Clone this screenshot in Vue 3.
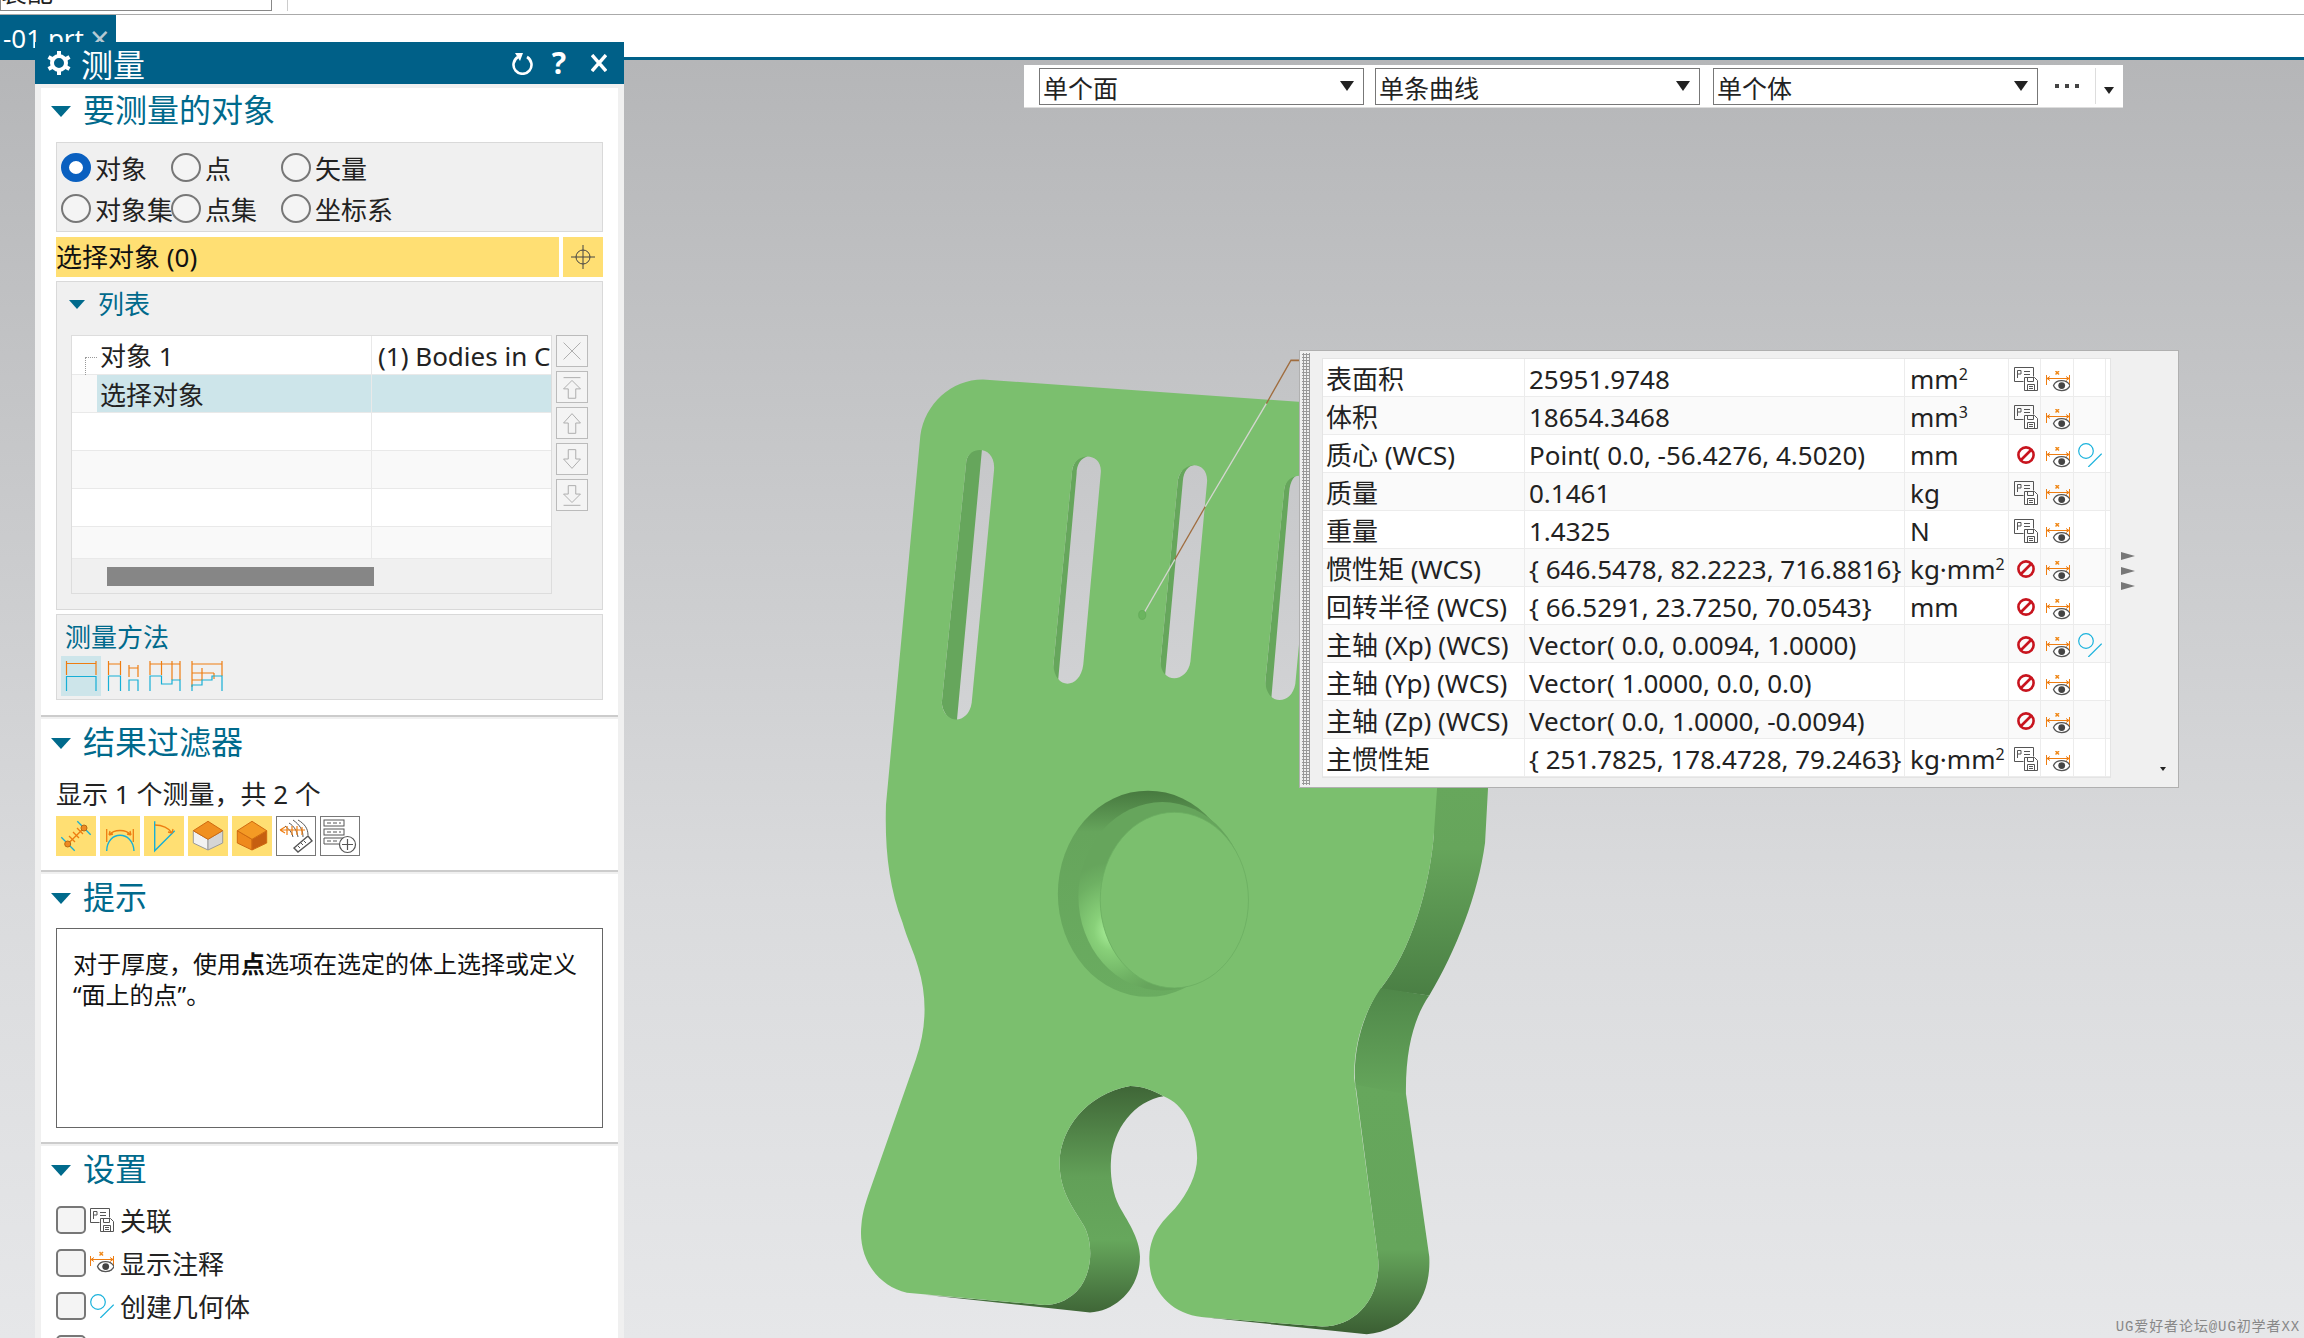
<script setup>
const radios = [
  { label: '对象', on: true },
  { label: '点' },
  { label: '矢量' },
  { label: '对象集' },
  { label: '点集' },
  { label: '坐标系' }
]

const listRows = [
  { name: '对象 1', value: '(1) Bodies in Component', cls: 'first' },
  { name: '选择对象', value: '', cls: 'picked' },
  { name: '', value: '', cls: '' },
  { name: '', value: '', cls: 'alt' },
  { name: '', value: '', cls: '' },
  { name: '', value: '', cls: 'alt short' }
]

const sideButtons = ['ic-del', 'ic-top', 'ic-up', 'ic-down', 'ic-bottom']
const methods = ['ic-m1', 'ic-m2', 'ic-m3', 'ic-m4']
const filters = [
  { icon: 'ic-f1', on: true },
  { icon: 'ic-f2', on: true },
  { icon: 'ic-f3', on: true },
  { icon: 'ic-f4', on: true },
  { icon: 'ic-f5', on: true },
  { icon: 'ic-f6' },
  { icon: 'ic-f7' }
]

const settings = [
  { label: '关联', icon: 'ic-save' },
  { label: '显示注释', icon: 'ic-note' },
  { label: '创建几何体', icon: 'ic-geo' }
]

const results = [
  { name: '表面积', value: '25951.9748', unit: 'mm', sup: '2', save: true },
  { name: '体积', value: '18654.3468', unit: 'mm', sup: '3', save: true },
  { name: '质心 (WCS)', value: 'Point( 0.0, -56.4276, 4.5020)', unit: 'mm', geo: true },
  { name: '质量', value: '0.1461', unit: 'kg', save: true },
  { name: '重量', value: '1.4325', unit: 'N', save: true },
  { name: '惯性矩 (WCS)', value: '{ 646.5478, 82.2223, 716.8816}', unit: 'kg·mm', sup: '2' },
  { name: '回转半径 (WCS)', value: '{ 66.5291, 23.7250, 70.0543}', unit: 'mm' },
  { name: '主轴 (Xp) (WCS)', value: 'Vector( 0.0, 0.0094, 1.0000)', unit: '', geo: true },
  { name: '主轴 (Yp) (WCS)', value: 'Vector( 1.0000, 0.0, 0.0)', unit: '' },
  { name: '主轴 (Zp) (WCS)', value: 'Vector( 0.0, 1.0000, -0.0094)', unit: '' },
  { name: '主惯性矩', value: '{ 251.7825, 178.4728, 79.2463}', unit: 'kg·mm', sup: '2', save: true }
]
</script>

<template>
  <div class="app">
    <!-- icon sprite -->
    <svg class="sprite" width="0" height="0">
      <defs>
        <symbol id="ic-save" viewBox="0 0 24 24">
          <g fill="none" stroke="#555" stroke-width="1">
            <path d="M9.5 14.500H.5V.5h19v9" />
            <path d="M3.500 11V3.500h3.500v3.500H3.500M10 4.500h6M10 7.500h6" />
            <path d="M10.500 10.500h10l3 3v10h-13zM13.500 10.500v4h6v-4M13.500 23.500v-6h7v6M15 19.500h4M15 21.500h4" fill="#fff" />
          </g>
        </symbol>
        <symbol id="ic-note" viewBox="0 0 24 22">
          <path d="M9.500 0l3.500 3.500M13 0L9.500 3.500" stroke="#f08a1c" stroke-width="1.500" fill="none" />
          <path d="M.5 4v10M23.500 4v10M1 7.500h22M1 7.500l3-2M1 7.500l3 2M23 7.500l-3-2M23 7.500l-3 2" stroke="#ee7d11" stroke-width="1" fill="none" />
          <path d="M7.500 14.600C10 7.900 21 7.900 24 14.600C21 21.300 10 21.300 7.500 14.600z" fill="#fff" stroke="#555" stroke-width="1.300" />
          <circle cx="15.700" cy="14.600" r="3.400" fill="#444" />
        </symbol>
        <symbol id="ic-geo" viewBox="0 0 24 24">
          <circle cx="8" cy="8" r="7.300" fill="none" stroke="#1ab2dc" stroke-width="1.200" />
          <path d="M10.300 24L23.700 10.700" stroke="#1ab2dc" stroke-width="1.200" />
        </symbol>
        <symbol id="ic-no" viewBox="0 0 18 18">
          <circle cx="9" cy="9" r="7.600" fill="none" stroke="#c8141e" stroke-width="2.600" />
          <path d="M4 14L14 4" stroke="#c8141e" stroke-width="2.600" />
        </symbol>
        <symbol id="ic-del" viewBox="0 0 32 32">
          <path d="M7 7l18 18M25 7L7 25" stroke="#aaa" fill="none" />
        </symbol>
        <symbol id="ic-top" viewBox="0 0 32 32">
          <path d="M7 6h18M16 9l9 9h-5v10h-8V18H7z" stroke="#aaa" fill="#f4f4f4" />
        </symbol>
        <symbol id="ic-up" viewBox="0 0 32 32">
          <path d="M16 6l9 10h-5v11h-8V16H7z" stroke="#aaa" fill="#f4f4f4" />
        </symbol>
        <symbol id="ic-down" viewBox="0 0 32 32">
          <path d="M16 26l9-10h-5V6h-8v10H7z" stroke="#aaa" fill="#f4f4f4" />
        </symbol>
        <symbol id="ic-bottom" viewBox="0 0 32 32">
          <path d="M7 27h18M16 24l9-9h-5V6h-8v9H7z" stroke="#aaa" fill="#f4f4f4" />
        </symbol>
        <symbol id="ic-m1" viewBox="0 0 40 40">
          <path d="M5.500 5v14M35 5v14M5.500 7.500H35" stroke="#ee7d11" fill="none" stroke-width="1.200" />
          <path d="M5.500 35V20.500H35V35" stroke="#17afd6" fill="none" stroke-width="1.200" />
        </symbol>
        <symbol id="ic-m2" viewBox="0 0 40 40">
          <path d="M5.500 5v14M17.500 5v14M5.500 8H17.500M26 9v12M35 9v12M26 12h9" stroke="#ee7d11" fill="none" stroke-width="1.200" />
          <path d="M5.500 35V20H17.500V35M26 35V24H35V35" stroke="#17afd6" fill="none" stroke-width="1.200" />
        </symbol>
        <symbol id="ic-m3" viewBox="0 0 40 40">
          <path d="M5 5v14M16.500 5v14M27 5v19M35 5v19M5 8H35" stroke="#ee7d11" fill="none" stroke-width="1.200" />
          <path d="M5 35V20H16.500V28H27V24H35V35" stroke="#17afd6" fill="none" stroke-width="1.200" />
        </symbol>
        <symbol id="ic-m4" viewBox="0 0 40 40">
          <path d="M5 5v26M35 5v15M15 12v12M27 17v6M5 8H35M5 17H27M5 24H15" stroke="#ee7d11" fill="none" stroke-width="1.200" />
          <path d="M5 35v-6H15v-5H25v-4h10V35" stroke="#17afd6" fill="none" stroke-width="1.200" />
        </symbol>
        <symbol id="ic-f1" viewBox="0 0 40 40">
          <path d="M5.300 21.300L18.700 34.700M21.300 5.300L34.700 18.700" stroke="#17afd6" stroke-width="1.300" />
          <path d="M11.700 28L28 12M13 20l6 6M17 16l6 6M21 12l6 6" stroke="#ee7d11" stroke-width="1.300" />
          <circle cx="11.700" cy="28" r="3" fill="#ee8a22" stroke="#b96a12" />
          <circle cx="28" cy="12" r="3" fill="#ee8a22" stroke="#b96a12" />
        </symbol>
        <symbol id="ic-f2" viewBox="0 0 40 40">
          <path d="M6.700 13v13M33.300 13v13M9 19C14 13 26 13 31 19M9 19l4-1M9 19l1-4M31 19l-4-1M31 19l-1-4" stroke="#ee7d11" stroke-width="1.300" fill="none" />
          <path d="M6.700 35C7 14 33 14 34 35" stroke="#17afd6" stroke-width="1.400" fill="none" />
        </symbol>
        <symbol id="ic-f3" viewBox="0 0 40 40">
          <path d="M10.700 5.300V34.700L30.700 14.700" stroke="#17afd6" stroke-width="1.400" fill="none" />
          <path d="M11 9C18 9 25 12 28 17M28 17l-4-1M28 17l1-4" stroke="#ee7d11" stroke-width="1.300" fill="none" />
        </symbol>
        <symbol id="ic-f4" viewBox="0 0 40 40">
          <path d="M5.300 14.700V27L20 34V23.300z" fill="#f2f2f2" stroke="#9a9a9a" />
          <path d="M34.700 14.700V27L20 34V23.300z" fill="#d5d5d5" stroke="#9a9a9a" />
          <path d="M20 5.300L34.700 14.700L20 23.300L5.300 14.700z" fill="#f09020" stroke="#cf6a10" />
        </symbol>
        <symbol id="ic-f5" viewBox="0 0 40 40">
          <path d="M5.300 14.700V27L20 34V23.300z" fill="#ef8a1c" stroke="#cf6a10" />
          <path d="M34.700 14.700V27L20 34V23.300z" fill="#c65f10" stroke="#cf6a10" />
          <path d="M20 5.300L34.700 14.700L20 23.300L5.300 14.700z" fill="#f49a24" stroke="#cf6a10" />
        </symbol>
        <symbol id="ic-f6" viewBox="0 0 40 40">
          <path d="M17 4C24 9 27 14 27 21M22 4C29 8 32 13 32 19M13 7C18 10 21 15 22 21M9 10C13 13 16 16 17 21" stroke="#555" fill="none" />
          <path d="M4 14H29M4 14l5-3M4 14l5 3M11 10v9M16 10v9M21 10v9M26 11v8" stroke="#ee7d11" fill="none" stroke-width="1.200" />
          <path d="M18 32L32 20L36 25L22 36z" fill="#fff" stroke="#555" stroke-width="1.400" />
          <path d="M22 30l2 2M25 27l2 2M28 25l2 2" stroke="#555" />
        </symbol>
        <symbol id="ic-f7" viewBox="0 0 40 40">
          <g fill="none" stroke="#555">
            <rect x="4" y="4" width="20" height="6" />
            <rect x="4" y="13" width="20" height="6" />
            <path d="M19 28H4v-6h20" />
            <path d="M7 7h4M13 7h4M19 7h2M7 16h4M13 16h4M19 16h2M7 25h4M13 25h4" />
            <circle cx="27.500" cy="28.500" r="8" fill="#fff" stroke-width="1.200" />
            <path d="M27.500 23v11M22 28.500h11" stroke-width="1.200" />
          </g>
        </symbol>
      </defs>
    </svg>

    <div class="topbar">
      <div class="top-input"><span>装配</span></div>
      <div class="top-sep"></div>
    </div>
    <div class="tabbar">
      <div class="tab"><span>-01 prt</span><span class="tab-close">×</span></div>
    </div>

    <!-- 3d model -->
    <svg class="scene" width="2304" height="1338" viewBox="0 0 2304 1338">
      <defs>
        <linearGradient id="sideA" x1="0" y1="0" x2="0" y2="1">
          <stop offset="0" stop-color="#67a75c" />
          <stop offset=".3" stop-color="#66a55b" />
          <stop offset="1" stop-color="#4a7f44" />
        </linearGradient>
        <linearGradient id="sideB" x1="0" y1="0" x2="0" y2="1">
          <stop offset="0" stop-color="#4f8749" />
          <stop offset="1" stop-color="#66a75c" />
        </linearGradient>
        <linearGradient id="sideC" x1="0" y1="0" x2="0" y2="1">
          <stop offset="0" stop-color="#66a75c" />
          <stop offset=".66" stop-color="#65a55b" />
          <stop offset="1" stop-color="#3b5e33" />
        </linearGradient>
        <linearGradient id="sideD" x1="0" y1="0" x2="0" y2="1">
          <stop offset="0" stop-color="#3f6637" />
          <stop offset=".4" stop-color="#62a058" />
          <stop offset=".68" stop-color="#66a75c" />
          <stop offset="1" stop-color="#3f6637" />
        </linearGradient>
        <linearGradient id="dentOuter" x1="0" y1="0" x2="0" y2="1">
          <stop offset="0" stop-color="#47793f" />
          <stop offset=".2" stop-color="#66a55c" />
          <stop offset="1" stop-color="#6aac60" />
        </linearGradient>
        <radialGradient id="dentFillet" cx=".2" cy=".68" r=".36">
          <stop offset="0" stop-color="#aef39e" />
          <stop offset=".3" stop-color="#88d079" />
          <stop offset=".75" stop-color="#6eb163" />
          <stop offset="1" stop-color="#66a55c" />
        </radialGradient>
      </defs>
      <g transform="translate(840 340) scale(.4464 .6365)">
        <!-- extrusion walls -->
        <path fill="url(#sideA)" d="M1330 700L1452 700L1445 790C1430 870 1380 960 1320 1030L1210 1020C1280 960 1320 860 1330 780z" />
        <path fill="url(#sideB)" d="M1210 1018L1320 1030C1290 1060 1265 1110 1268 1190L1155 1175C1145 1110 1180 1050 1210 1018z" />
        <path fill="url(#sideC)" d="M1155 1170L1268 1185L1320 1440C1325 1500 1280 1555 1180 1562L810 1535L1080 1550C1160 1550 1215 1500 1205 1440z" />
        <path fill="url(#sideD)" d="M650 1172C550 1185 495 1240 492 1290C490 1340 530 1370 545 1390C570 1420 565 1470 530 1495C500 1515 470 1518 440 1515L190 1500L560 1528C620 1525 672 1490 672 1440C672 1410 640 1380 625 1360C610 1340 605 1310 607 1290C610 1240 660 1195 725 1188C700 1178 675 1172 650 1172z" />
        <path fill="#66a65c" d="M283 190C290 170 320 165 318 172L262 597C245 600 230 585 228 570z" />
        <path fill="#66a65c" d="M520 205C525 185 545 180 555 183C540 185 530 195 530 210L488 540C478 530 476 520 478 510z" />
        <path fill="#66a65c" d="M757 220C765 198 785 192 795 196C780 198 770 205 768 222L728 530C718 525 716 515 718 505z" />
        <path fill="#66a65c" d="M995 235C1000 212 1020 205 1035 208C1018 212 1008 220 1006 240L966 565C955 560 951 548 953 535z" />
        <!-- front face, slots and keyhole are open -->
        <path fill="#7bbf6e" fill-rule="evenodd" d="M180 150C190 100 250 62 320 62L1450 118L1338 700L1330 780C1320 860 1280 960 1210 1020C1180 1050 1150 1100 1152 1160L1205 1440C1215 1500 1160 1550 1080 1550L810 1535C740 1530 690 1490 693 1440C695 1400 730 1380 750 1365C780 1340 800 1310 800 1285C800 1240 770 1200 725 1188C700 1178 675 1172 650 1172C550 1185 495 1240 492 1290C490 1340 530 1370 545 1390C570 1420 565 1470 530 1495C500 1515 470 1518 440 1515L150 1497C80 1485 40 1440 48 1390C50 1370 60 1350 70 1330L170 1130C195 1080 195 1030 175 985C165 960 150 940 140 915C110 860 100 800 103 730z
          M283 190C290 165 350 165 345 205L295 570C288 605 232 605 228 570z
          M520 205C525 175 590 175 584 210L545 510C538 550 480 550 478 510z
          M757 220C765 188 828 188 822 225L785 505C778 540 718 540 718 505z
          M995 235C1000 205 1065 205 1060 240L1020 540C1012 575 953 575 953 535z" />
        <!-- boss -->
        <ellipse cx="690" cy="870" rx="202" ry="162" fill="url(#dentOuter)" />
        <ellipse cx="722" cy="874" rx="188" ry="148" fill="url(#dentFillet)" />
        <ellipse cx="749" cy="880" rx="166" ry="138" fill="#7bbf6e" stroke="#6cae62" stroke-width="1.500" />
        <!-- leader line -->
        <g fill="none" stroke-width="2.600">
          <path d="M1032 32H1010L955 100" stroke="#a06d3f" />
          <path d="M955 100L818 262" stroke="#d4d6d0" />
          <path d="M818 262L750 345" stroke="#a06d3f" />
          <path d="M750 345L680 430" stroke="#d4d6d0" />
        </g>
        <ellipse cx="677" cy="432" rx="8" ry="7" fill="#6bb55f" stroke="#5da353" />
      </g>
    </svg>

    <!-- selection toolbar -->
    <div class="toolbar">
      <div class="combo c1"><span>单个面</span><i></i></div>
      <div class="combo c2"><span>单条曲线</span><i></i></div>
      <div class="combo c3"><span>单个体</span><i></i></div>
      <div class="more"><i></i><i></i><i></i></div>
      <div class="tool-sep"></div>
      <i class="tool-arrow"></i>
    </div>

    <!-- measure dialog -->
    <div class="dialog">
      <div class="dlg-head">
        <svg class="gear" width="24" height="26" viewBox="0 0 24 26">
          <circle cx="12" cy="13" r="7" fill="none" stroke="#fff" stroke-width="4" />
          <path d="M12 1v5M12 20v5M1.500 7l4.500 2.500M18 16.500l4.500 2.500M1.500 19L6 16.500M18 9.500L22.500 7" stroke="#fff" stroke-width="4" />
        </svg>
        <span class="dlg-title">测量</span>
        <svg class="head-btn reset" width="22" height="24" viewBox="0 0 22 24">
          <path d="M6 6a9 9 0 1 0 9 0" fill="none" stroke="#fff" stroke-width="2.600" />
          <path d="M11 2L3 2L8 10z" fill="#fff" />
        </svg>
        <span class="head-q">?</span>
        <svg class="head-btn" width="16" height="18" viewBox="0 0 16 18">
          <path d="M1 1L15 17M15 1L1 17" stroke="#fff" stroke-width="3.400" />
        </svg>
      </div>

      <div class="dlg-body">
        <section class="panel p1">
          <h3 class="sec-head"><i class="caret"></i><span>要测量的对象</span></h3>
          <div class="box radios">
            <div v-for="r in radios" :key="r.label" class="radio-item">
              <span class="radio" :class="{ on: r.on }"></span>
              <span class="radio-label">{{ r.label }}</span>
            </div>
          </div>
          <div class="select-row">
            <div class="select-main">选择对象 (0)</div>
            <div class="select-btn">
              <svg width="28" height="28" viewBox="0 0 28 28">
                <circle cx="14" cy="14" r="7" fill="none" stroke="#444" />
                <path d="M14 2v24M2 14h24" stroke="#444" />
              </svg>
            </div>
          </div>
          <div class="box list-group">
            <div class="sub-head"><i class="caret small"></i>列表</div>
            <div class="list-wrap">
              <div class="list">
                <div v-for="(row, i) in listRows" :key="i" class="list-row" :class="row.cls">
                  <div class="cell name"><span>{{ row.name }}</span></div>
                  <div class="cell val"><span>{{ row.value }}</span></div>
                </div>
                <div class="hscroll"><div class="thumb"></div></div>
              </div>
              <div class="side-btns">
                <div v-for="b in sideButtons" :key="b" class="side-btn">
                  <svg width="30" height="30"><use :href="'#' + b" /></svg>
                </div>
              </div>
            </div>
          </div>
          <div class="box method">
            <div class="method-label">测量方法</div>
            <div class="method-icons">
              <div v-for="(m, i) in methods" :key="m" class="method-icon" :class="{ on: i === 0 }">
                <svg width="40" height="40"><use :href="'#' + m" /></svg>
              </div>
            </div>
          </div>
        </section>

        <section class="panel p2">
          <h3 class="sec-head"><i class="caret"></i><span>结果过滤器</span></h3>
          <div class="count">显示 1 个测量，共 2 个</div>
          <div class="filter-row">
            <div v-for="f in filters" :key="f.icon" class="filter" :class="{ on: f.on }">
              <svg width="40" height="40"><use :href="'#' + f.icon" /></svg>
            </div>
          </div>
        </section>

        <section class="panel p3">
          <h3 class="sec-head"><i class="caret"></i><span>提示</span></h3>
          <div class="hint">对于厚度，使用<b>点</b>选项在选定的体上选择或定义<br />“面上的点”。</div>
        </section>

        <section class="panel p4">
          <h3 class="sec-head"><i class="caret"></i><span>设置</span></h3>
          <div v-for="s in settings" :key="s.label" class="check-row">
            <span class="check"></span>
            <svg width="24" height="24"><use :href="'#' + s.icon" /></svg>
            <span class="check-label">{{ s.label }}</span>
          </div>
          <div class="check-row"><span class="check"></span></div>
        </section>
      </div>
    </div>

    <!-- results popup -->
    <div class="popup">
      <div class="grip"></div>
      <div class="res-table">
        <div v-for="(r, i) in results" :key="r.name" class="res-row" :class="{ alt: i % 2 === 1 }">
          <div class="res-cell res-name">{{ r.name }}</div>
          <div class="res-cell res-val">{{ r.value }}</div>
          <div class="res-cell res-unit">{{ r.unit }}<sup v-if="r.sup">{{ r.sup }}</sup></div>
          <div class="res-cell res-ic">
            <svg v-if="r.save" class="ic-save" width="24" height="24"><use href="#ic-save" /></svg>
            <svg v-else class="ic-no" width="18" height="18"><use href="#ic-no" /></svg>
          </div>
          <div class="res-cell res-ic wide">
            <svg class="ic-note" width="24" height="22"><use href="#ic-note" /></svg>
          </div>
          <div class="res-cell res-ic">
            <svg v-if="r.geo" class="ic-geo" width="24" height="24"><use href="#ic-geo" /></svg>
          </div>
          <div class="res-cell res-end"></div>
        </div>
      </div>
      <div class="pop-side">
        <i></i><i></i><i></i>
      </div>
      <i class="pop-down"></i>
    </div>

    <div class="watermark">UG爱好者论坛@UG初学者XX</div>
  </div>
</template>

<style>
html, body {
  margin: 0;
  background: #fff;
}
</style>

<style scoped>
.app {
  position: relative;
  width: 2304px;
  height: 1338px;
  overflow: hidden;
  font-family: "Noto Sans", "Noto Sans CJK SC", sans-serif;
  font-size: 26px;
  color: #222;
  background: linear-gradient(#b3b4b6 0, #b5b6b8 60px, #dadbdd 900px, #e6e7e9 1338px);
}
.sprite { position: absolute; }
i { display: block; }

.topbar {
  display: flex;
  height: 14px;
  background: #fff;
  border-bottom: 1px solid #aaa;
}
.top-input {
  width: 272px;
  height: 11px;
  border: 1px solid #888;
  border-top: 0;
  overflow: hidden;
  box-sizing: border-box;
  color: #222;
  line-height: 0;
}
.top-input span { display: block; margin-top: -8px; }
.top-sep {
  width: 1px;
  height: 11px;
  margin-left: 15px;
  background: #ccc;
}
.tabbar {
  height: 42px;
  background: #fff;
  border-bottom: 3px solid #006088;
}
.tab {
  display: flex;
  align-items: center;
  width: 116px;
  height: 45px;
  padding-left: 3px;
  box-sizing: border-box;
  background: #006088;
  color: #fff;
  white-space: nowrap;
}
.tab-close {
  margin-left: 6px;
  color: #b6c9d3;
  font-size: 34px;
  line-height: 30px;
}

.scene {
  position: absolute;
  left: 0;
  top: 0;
}

.toolbar {
  position: absolute;
  left: 1024px;
  top: 65px;
  display: flex;
  align-items: center;
  width: 1099px;
  height: 43px;
  padding-left: 15px;
  box-sizing: border-box;
  background: #fff;
  border-bottom: 1px solid #ddd;
}
.combo {
  display: flex;
  align-items: center;
  justify-content: space-between;
  width: 325px;
  height: 37px;
  padding: 0 9px 0 3px;
  box-sizing: border-box;
  border: 1px solid #777;
  font-size: 25px;
}
.combo span { padding-top: 2px; }
.combo i {
  width: 0;
  height: 0;
  border-left: 7px solid transparent;
  border-right: 7px solid transparent;
  border-top: 10px solid #222;
}
.c2 { margin-left: 11px; }
.c3 { margin-left: 13px; }
.more {
  display: flex;
  justify-content: center;
  gap: 6px;
  width: 57px;
}
.more i {
  width: 4px;
  height: 4px;
  background: #444;
}
.tool-sep {
  width: 1px;
  height: 36px;
  background: #ddd;
}
.tool-arrow {
  width: 0;
  height: 0;
  margin: 8px 0 0 8px;
  border-left: 5px solid transparent;
  border-right: 5px solid transparent;
  border-top: 7px solid #222;
}

.dialog {
  position: absolute;
  left: 35px;
  top: 42px;
  width: 589px;
  height: 1296px;
  overflow: hidden;
  background: #f0f0f0;
}
.dlg-head {
  display: flex;
  align-items: center;
  height: 42px;
  padding-left: 12px;
  background: #006088;
  color: #fff;
}
.dlg-title {
  margin-left: 10px;
  font-size: 32px;
  flex: 1;
}
.head-q {
  margin: 0 0 0 18px;
  font-size: 30px;
  font-weight: 700;
  line-height: 42px;
}
.head-btn { margin: 0 17px 0 25px; }
.head-btn.reset { margin: 0; }

.dlg-body { padding: 4px 6px 0; }
.panel {
  background: #fff;
  padding: 0 15px;
  box-sizing: border-box;
  border-bottom: 2px solid #ccc;
  margin-bottom: 2px;
}
.p1 { height: 629px; }
.p2 { height: 153px; }
.p3 { height: 270px; }
.p4 { border-bottom: 0; height: 300px; }

.sec-head {
  display: flex;
  align-items: center;
  height: 44px;
  margin: 0;
  font-size: 32px;
  font-weight: 400;
  color: #006a8c;
}
.sec-head span { margin-top: -3px; }
.p1 .sec-head { height: 42px; }
.caret {
  width: 0;
  height: 0;
  margin: 4px 12px 0 -5px;
  border-left: 10px solid transparent;
  border-right: 10px solid transparent;
  border-top: 11px solid #006a8c;
}
.caret.small {
  margin: 2px 13px 0 -2px;
  border-left-width: 8.500px;
  border-right-width: 8.500px;
  border-top-width: 9px;
}

.box {
  background: #f0f0f0;
  border: 1px solid #d9d9d9;
  box-sizing: border-box;
}
.radios {
  display: grid;
  grid-template-columns: 110px 110px 1fr;
  grid-auto-rows: 41px;
  align-content: center;
  height: 90px;
  margin-top: 12px;
  padding: 2px 0 0 4px;
}
.radio-item {
  display: flex;
  align-items: center;
  white-space: nowrap;
}
.radio {
  flex: none;
  width: 30px;
  height: 29px;
  margin-right: 4px;
  box-sizing: border-box;
  border: 2px solid #777;
  border-radius: 50%;
  background: #f4f4f4;
}
.radio.on {
  border: 8px solid #0a60c0;
  background: #fff;
}
.select-row {
  display: flex;
  gap: 4px;
  height: 40px;
  margin-top: 5px;
}
.select-main {
  flex: 1;
  background: #ffdf73;
  color: #111;
  line-height: 40px;
}
.select-btn {
  display: flex;
  align-items: center;
  justify-content: center;
  width: 40px;
  background: #ffdf73;
}
.list-group {
  height: 329px;
  margin-top: 4px;
  padding: 0 14px 0 14px;
}
.sub-head {
  display: flex;
  align-items: center;
  height: 53px;
  padding-bottom: 11px;
  box-sizing: border-box;
  color: #006a8c;
}
.list-wrap {
  display: flex;
  gap: 4px;
}
.list {
  width: 481px;
  height: 259px;
  box-sizing: border-box;
  border: 1px solid #ddd;
  background: #fff;
}
.list-row {
  display: flex;
  height: 38px;
  box-sizing: border-box;
  border-bottom: 1px solid #e9e9e9;
  line-height: 41px;
}
.list-row.first { height: 39px; }
.list-row.alt { background: #f9f9f9; }
.list-row.short { height: 32px; }
.cell {
  box-sizing: border-box;
  overflow: hidden;
  white-space: nowrap;
}
.cell.name {
  position: relative;
  width: 300px;
  padding-left: 28px;
  border-right: 1px solid #e9e9e9;
}
.cell.val {
  flex: 1;
  padding-left: 6px;
  padding-right: 3px;
}
.first .cell.name::before {
  content: "";
  position: absolute;
  left: 13px;
  top: 21px;
  width: 11px;
  height: 38px;
  border: 1px dotted #999;
  border-right: 0;
}
.first { overflow: visible; }
.first .cell.name { overflow: visible; }
.picked .cell { background: #cde5ea; }
.picked .cell.name {
  background: linear-gradient(90deg, #f9f9f9 25px, #cde5ea 25px);
}
.hscroll {
  position: relative;
  height: 34px;
  background: #f0f0f0;
}
.thumb {
  position: absolute;
  left: 35px;
  top: 8px;
  width: 267px;
  height: 19px;
  background: #868686;
}
.side-btns {
  display: flex;
  flex-direction: column;
  gap: 4px;
}
.side-btn {
  display: flex;
  width: 32px;
  height: 32px;
  box-sizing: border-box;
  border: 1px solid #bbb;
  background: #f4f4f4;
}
.method {
  height: 86px;
  margin-top: 4px;
  padding: 4px 0 0 4px;
}
.method-label {
  height: 37px;
  margin-left: 4px;
  color: #006a8c;
  line-height: 36px;
}
.method-icons {
  display: flex;
  gap: 2px;
}
.method-icon {
  width: 40px;
  height: 40px;
}
.method-icon.on { background: #cde5ea; }

.count {
  margin-top: 9px;
  height: 44px;
  line-height: 44px;
}
.filter-row {
  display: flex;
  gap: 4px;
}
.filter {
  width: 40px;
  height: 40px;
  box-sizing: border-box;
  border: 1px solid #777;
  background: #fff;
}
.filter svg { margin: -1px; }
.filter.on {
  border: 0;
  background: #ffdf73;
}
.filter.on svg { margin: 0; }

.hint {
  height: 200px;
  margin-top: 10px;
  padding: 19px 10px 0 16px;
  box-sizing: border-box;
  border: 1px solid #666;
  font-size: 24px;
  line-height: 31px;
  color: #111;
}
.hint b { font-weight: 700; }

.check-row {
  display: flex;
  align-items: center;
  height: 43px;
}
.p4 .sec-head { margin-bottom: 8px; }
.check {
  flex: none;
  width: 30px;
  height: 28px;
  margin-right: 4px;
  box-sizing: border-box;
  border: 2px solid #777;
  border-radius: 5px;
  background: #f4f4f4;
}
.check-label { margin-left: 6px; }

.popup {
  position: absolute;
  left: 1299px;
  top: 350px;
  display: flex;
  width: 880px;
  height: 438px;
  box-sizing: border-box;
  background: #f0f0f0;
  border: 1px solid #b0b0b0;
}
.grip {
  width: 8px;
  margin: 2px 0 2px 2px;
  background-image: radial-gradient(#999 1px, transparent 1.200px);
  background-size: 3px 3px;
}
.res-table {
  width: 789px;
  height: 420px;
  margin: 7px 0 0 12px;
  box-sizing: border-box;
  border: 1px solid #e4e4e4;
  background: #fff;
}
.res-row {
  display: flex;
  height: 38px;
  box-sizing: border-box;
  border-bottom: 1px solid #ececec;
  line-height: 41px;
}
.res-row.alt { background: #fafafa; }
.res-cell {
  position: relative;
  box-sizing: border-box;
  flex: none;
  border-right: 1px solid #ececec;
  white-space: nowrap;
}
.res-name { width: 202px; padding-left: 3px; }
.res-val { width: 380px; padding-left: 4px; }
.res-unit { width: 104px; padding-left: 5px; }
.res-unit sup {
  font-size: 16px;
  line-height: 0;
  vertical-align: 9px;
}
.res-ic { width: 32px; }
.res-ic.wide { width: 33px; }
.res-end { width: 5px; border-right: 0; }
.res-ic svg { position: absolute; }
.ic-save { left: 5px; top: 8px; }
.ic-no { left: 8px; top: 11px; }
.ic-note { left: 5px; top: 12px; }
.ic-geo { left: 4px; top: 8px; }
.pop-side {
  display: flex;
  flex-direction: column;
  gap: 7px;
  margin: 201px 0 0 10px;
}
.pop-side i {
  width: 0;
  height: 0;
  border-top: 4px solid transparent;
  border-bottom: 4px solid transparent;
  border-left: 14px solid #777;
}
.pop-down {
  position: absolute;
  left: 860px;
  top: 416px;
  width: 0;
  height: 0;
  border-left: 3px solid transparent;
  border-right: 3px solid transparent;
  border-top: 4px solid #222;
}

.watermark {
  position: absolute;
  right: 4px;
  bottom: 3px;
  font-family: "Liberation Mono", "Noto Sans CJK SC", monospace;
  font-size: 14px;
  color: #888;
  letter-spacing: .9px;
}
</style>
